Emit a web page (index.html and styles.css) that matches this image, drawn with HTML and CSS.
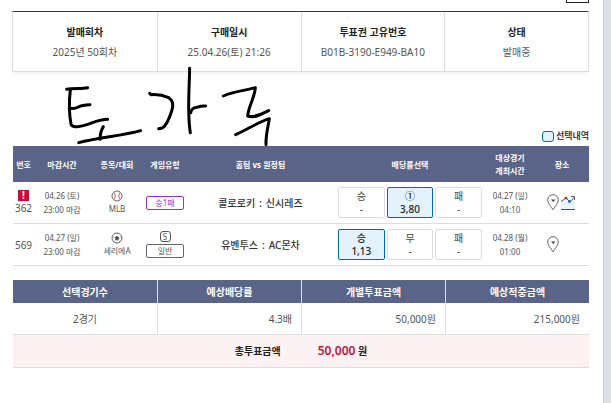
FILE: index.html
```
<!DOCTYPE html>
<html lang="ko">
  <head>
    <meta charset="UTF-8" />
    <meta name="viewport" content="width=device-width, initial-scale=1.0" />
    <title>구매내역</title>
    <link rel="stylesheet" href="styles.css">
  </head>
  <body>
    <main class="page">
      <div class="top-bar">
        <button class="close-btn" type="button" aria-label="닫기"></button>
      </div>

      <dl class="info">
        <div class="info-item">
          <dt>발매회차</dt>
          <dd>2025년 50회차</dd>
        </div>
        <div class="info-item">
          <dt>구매일시</dt>
          <dd>25.04.26(토) 21:26</dd>
        </div>
        <div class="info-item">
          <dt>투표권 고유번호</dt>
          <dd>B01B-3190-E949-BA10</dd>
        </div>
        <div class="info-item">
          <dt>상태</dt>
          <dd>발매중</dd>
        </div>
      </dl>

      <div class="tables">
        <div class="legend"><span class="legend-box"></span>선택내역</div>

        <table class="games">
          <colgroup>
            <col class="col-num">
            <col class="col-time">
            <col class="col-sport">
            <col class="col-type">
            <col class="col-teams">
            <col class="col-odds">
            <col class="col-date">
            <col class="col-place">
          </colgroup>
          <thead>
            <tr>
              <th>번호</th>
              <th>마감시간</th>
              <th>종목/대회</th>
              <th>게임유형</th>
              <th>홈팀 vs 원정팀</th>
              <th>배당률선택</th>
              <th>대상경기<br>개최시간</th>
              <th>장소</th>
            </tr>
          </thead>
          <tbody>
            <tr>
              <td class="num"><span class="alert">!</span>362</td>
              <td>04.26 (토)<br>23:00 마감</td>
              <td>
                <svg class="ball" viewBox="0 0 12 12">
                  <circle cx="6" cy="6" r="5" fill="#fff" stroke="#666" />
                  <path d="M3.2 2.5Q5.2 6 3.2 9.5M8.8 2.5Q6.8 6 8.8 9.5" fill="none" stroke="#d98a86" stroke-width="1.2" />
                </svg>
                MLB
              </td>
              <td><span class="type type-purple">승1패</span></td>
              <td><div class="teams"><span>콜로로키</span><span>:</span><span>신시레즈</span></div></td>
              <td>
                <div class="odds">
                  <button type="button">승<br>-</button>
                  <button type="button" class="selected">①<br>3,80</button>
                  <button type="button">패<br>-</button>
                </div>
              </td>
              <td>04.27 (일)<br>04:10</td>
              <td>
                <div class="place">
                  <svg class="pin" viewBox="0 0 12 17">
                    <path d="M6 .7C3 .7.7 3 .7 6c0 3.5 3.1 6 5.3 9.8C8.2 12 11.3 9.5 11.3 6 11.3 3 9 .7 6 .7z" fill="#fff" stroke="#666" />
                    <path d="M4 5.500h4.500L6.200 8z" fill="#444" />
                  </svg>
                  <svg class="chart" viewBox="0 0 14 14">
                    <path d="M0 5.500L5 2l4 4 5-5v12H0z" fill="#eaf4fc" />
                    <path d="M0 5.500L5 2l4 4 4.500-5M10 .5h3.500V4M0 13.500h14" fill="none" stroke="#555" />
                    <circle cx="5" cy="2" r="1.3" fill="#f00018" />
                    <circle cx="8.500" cy="5.500" r="1.4" fill="#1560e8" />
                  </svg>
                </div>
              </td>
            </tr>
            <tr>
              <td class="num">569</td>
              <td>04.27 (일)<br>23:00 마감</td>
              <td>
                <svg class="ball" viewBox="0 0 12 12">
                  <circle cx="6" cy="6" r="5" fill="#fff" stroke="#666" />
                  <path d="M6 3.800l2.300 1.700-.9 2.700H4.600l-.9-2.700z" fill="#555" />
                  <path d="M6 1v1.200M1.500 5l1.200.4M10.500 5l-1.200.4M3.200 9.800l.7-1M8.800 9.800l-.7-1" stroke="#888" />
                </svg>
                세리에A
              </td>
              <td><span class="single">S</span><span class="type">일반</span></td>
              <td><div class="teams"><span>유벤투스</span><span>:</span><span>AC몬차</span></div></td>
              <td>
                <div class="odds">
                  <button type="button" class="selected">승<br>1,13</button>
                  <button type="button">무<br>-</button>
                  <button type="button">패<br>-</button>
                </div>
              </td>
              <td>04.28 (월)<br>01:00</td>
              <td>
                <div class="place">
                  <svg class="pin" viewBox="0 0 12 17">
                    <path d="M6 .7C3 .7.7 3 .7 6c0 3.5 3.1 6 5.3 9.8C8.2 12 11.3 9.5 11.3 6 11.3 3 9 .7 6 .7z" fill="#fff" stroke="#666" />
                    <path d="M4 5.500h4.500L6.200 8z" fill="#444" />
                  </svg>
                </div>
              </td>
            </tr>
          </tbody>
        </table>

        <table class="summary">
          <thead>
            <tr>
              <th>선택경기수</th>
              <th>예상배당률</th>
              <th>개별투표금액</th>
              <th>예상적중금액</th>
            </tr>
          </thead>
          <tbody>
            <tr>
              <td class="count">2경기</td>
              <td>4.3배</td>
              <td>50,000원</td>
              <td>215,000원</td>
            </tr>
          </tbody>
          <tfoot>
            <tr>
              <td colspan="4">
                <div class="total">
                  <span>총투표금액</span>
                  <span><strong>50,000</strong> 원</span>
                </div>
              </td>
            </tr>
          </tfoot>
        </table>
      </div>
    </main>

    <!-- Handwritten memo over the page -->
    <svg class="memo" viewBox="0 0 720 255" aria-hidden="true">
      <path d="M50 73C72 69 94 72 113 68" />
      <path d="M61 75C57 108 57 145 63 178Q66 187 82 185C115 182 139 163 173 163" />
      <path d="M60 130Q75 132 85 126T120 119" />
      <path d="M160 185Q151 199 150 223" />
      <path d="M86 233C148 217 213 213 272 197" />
      <path d="M299 85L303 89C323 87 340 91 356 98Q374 109 366 135Q352 180 337 189L326 191" />
      <path d="M419 10C418 75 411 145 421 203" />
      <path d="M422 143C424 130 433 128 444 126Q454 122 467 123" />
      <path d="M520 93C551 79 585 77 616 68C614 99 596 121 593 153C616 161 638 145 656 137" />
      <path d="M557 209C591 194 625 171 658 161C654 187 647 210 648 239" />
    </svg>
  </body>
</html>
```
FILE: styles.css
```
* {
  box-sizing: border-box;
}

body {
  margin: 0;
  min-height: 100vh;
  padding-right: 7px;
  background: #dde0e6;
  font-family: "Noto Sans", "Noto Sans CJK KR", sans-serif;
  font-size: 10px;
  line-height: 14px;
  color: #555;
}

.page {
  min-height: 100vh;
  padding: 0 14px 0 12px;
  background: #fff;
  border-right: 1px solid #c9ccd2;
}

.top-bar {
  display: flex;
  justify-content: flex-end;
  height: 11px;
}

.close-btn {
  width: 23px;
  height: 3px;
  padding: 0;
  background: #fff;
  border: 1px solid #222;
  border-top: 0;
}

.info {
  display: grid;
  grid-template-columns: repeat(4, 1fr);
  margin: 0 0 54px;
  border: 1px solid #ddd;
  border-top-color: #2d3c60;
  box-shadow: 0 3px 0 #f7f7f7;
  text-align: center;
}

.info-item {
  padding: 13px 0 12px;
}

.info-item + .info-item {
  border-left: 1px solid #ddd;
}

.info dt {
  margin-bottom: 6px;
  font-weight: bold;
  color: #222;
}

.info dd {
  margin: 0;
}

.tables {
  padding-left: 1px;
}

.legend {
  display: flex;
  justify-content: flex-end;
  align-items: center;
  gap: 2px;
  height: 20px;
  font-size: 9px;
  font-weight: bold;
  color: #444;
}

.legend-box {
  width: 12px;
  height: 11px;
  background: #e3f2fd;
  border: 1px solid #0068b3;
  border-radius: 3px;
}

table {
  width: 100%;
  table-layout: fixed;
  border-collapse: separate;
  border-spacing: 0;
}

th {
  padding: 0;
  background: #5a6488;
  color: #fff;
}

td {
  padding: 0;
  border-bottom: 1px solid #ddd;
  text-align: center;
}

.games {
  font-size: 8px;
}

.games th {
  height: 36px;
  line-height: 13px;
}

.games td {
  height: 42px;
}

.col-num {
  width: 21px;
}

.col-time {
  width: 56px;
}

.col-sport {
  width: 54px;
}

.col-type {
  width: 42px;
}

.col-odds {
  width: 150px;
}

.col-date {
  width: 50px;
}

.col-place {
  width: 54px;
}

.games .num {
  font-size: 10px;
}

.alert {
  display: block;
  width: 11px;
  height: 11px;
  margin: 0 auto;
  background: #c3103a;
  color: #fff;
  font-weight: bold;
  line-height: 11px;
}

.ball {
  display: block;
  width: 12px;
  height: 12px;
  margin: 0 auto;
}

.type {
  display: block;
  height: 14px;
  margin: 0 2px;
  border: 1px solid #666;
  border-radius: 2px;
  line-height: 12px;
}

.type-purple {
  border-color: #9b30c9;
  color: #9b30c9;
}

.single {
  display: block;
  width: 11px;
  height: 11px;
  margin: 0 auto 2px;
  border: 1px solid #555;
  border-radius: 3px;
  line-height: 9px;
}

.teams {
  display: flex;
  justify-content: center;
  gap: 4px;
  font-size: 10px;
  font-weight: 500;
  color: #333;
}

.odds {
  display: flex;
  gap: 2px;
  padding: 0 3px;
}

.odds button {
  flex: 1;
  height: 31px;
  padding: 0;
  background: #fff;
  border: 1px solid #ddd;
  border-radius: 2px;
  color: #444;
  font: inherit;
  font-size: 10px;
  line-height: 13px;
  cursor: pointer;
}

.odds .selected {
  background: #e3f2fd;
  border-color: #0068b3;
  color: #222;
  font-weight: 500;
}

.place {
  display: flex;
  align-items: center;
  gap: 2px;
  padding-left: 12px;
}

.pin {
  width: 12px;
  height: 17px;
}

.chart {
  width: 14px;
  height: 14px;
}

.summary {
  margin-top: 14px;
}

.summary th {
  height: 23px;
}

.summary th + th,
.summary td + td {
  border-left: 1px solid #ddd;
}

.summary td {
  height: 32px;
  padding-right: 9px;
  text-align: right;
}

.summary .count {
  padding-right: 0;
  text-align: center;
}

.summary tfoot td {
  height: 33px;
  padding: 0;
  background: #fcf1f3;
  color: #222;
  font-weight: bold;
}

.total {
  display: flex;
  justify-content: center;
  align-items: baseline;
  gap: 37px;
}

.total strong {
  color: #c3103a;
  font-size: 12px;
  font-weight: 600;
}

.memo {
  position: absolute;
  top: 65px;
  left: 50px;
  width: 240px;
  height: 85px;
  fill: none;
  stroke: #000;
  stroke-width: 9;
  stroke-linecap: round;
  stroke-linejoin: round;
  pointer-events: none;
}
```
